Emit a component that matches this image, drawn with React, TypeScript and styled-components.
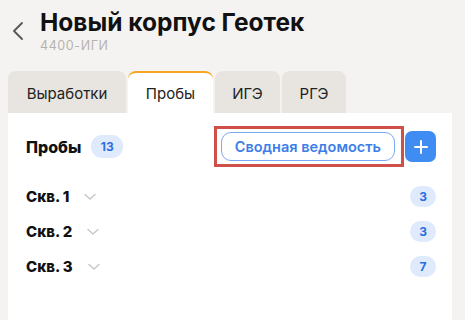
import React from 'react';
import styled, { createGlobalStyle } from 'styled-components';

const GlobalStyle = createGlobalStyle`
  html, body {
    margin: 0;
    padding: 0;
    background: #f5f3f1;
    font-family: Inter, "Noto Sans", sans-serif;
  }
`;

const Page = styled.div`
  width: 465px;
  height: 320px;
  overflow: hidden;
  display: flex;
  flex-direction: column;
`;

const Header = styled.div`
  display: flex;
  align-items: flex-start;
  padding: 6px 0 0 10px;
  gap: 14px;
`;

const BackButton = styled.div`
  width: 16px;
  height: 26px;
  margin-top: 12px;
  display: flex;
  align-items: center;
  justify-content: center;
  color: #555;
`;

const TitleBlock = styled.div`
  display: flex;
  flex-direction: column;
`;

const Title = styled.div`
  font-size: 24.5px;
  font-weight: 700;
  color: #111;
  line-height: 32px;
`;

const Subtitle = styled.div`
  font-size: 12.5px;
  color: #b5b3b0;
  line-height: 16px;
  letter-spacing: 0.6px;
`;

const Tabs = styled.div`
  display: flex;
  gap: 2px;
  margin: 17px 0 0 8px;
`;

const Tab = styled.div<{ $active?: boolean; $w: number }>`
  width: ${p => p.$w}px;
  height: 42px;
  box-sizing: border-box;
  display: flex;
  align-items: center;
  justify-content: center;
  font-size: 15px;
  color: #222;
  border-radius: 8px 8px 0 0;
  background: ${p => (p.$active ? '#ffffff' : '#e8e4e0')};
  border-top: ${p => (p.$active ? '2px solid #f5a623' : '2px solid transparent')};
`;

const Panel = styled.div`
  background: #fff;
  margin: 0 13px 0 8px;
  flex: 1;
  padding: 18px 16px 0 18px;
`;

const Toolbar = styled.div`
  display: flex;
  align-items: center;
  height: 31px;
`;

const SectionTitle = styled.div`
  font-size: 16px;
  font-weight: 800;
  color: #111;
`;

const Count = styled.div<{ $w?: number }>`
  min-width: ${p => p.$w ?? 26}px;
  height: 21px;
  box-sizing: border-box;
  padding: 0 6px;
  border-radius: 11px;
  background: #dfeafc;
  color: #2a6fe0;
  font-size: 12px;
  font-weight: 700;
  display: flex;
  align-items: center;
  justify-content: center;
`;

const Spacer = styled.div`
  flex: 1;
`;

const Highlight = styled.div`
  border: 3px solid #cf5048;
  padding: 3px 6px 3px 4px;
  margin: -6px 1px;
  display: flex;
`;

const OutlineButton = styled.button`
  height: 29px;
  padding: 0 13px;
  border: 1.5px solid #7aaaf2;
  border-radius: 10px;
  background: #fff;
  color: #3b7ee8;
  font-family: inherit;
  font-size: 14.5px;
  font-weight: 600;
`;

const AddButton = styled.button`
  width: 31px;
  height: 31px;
  border: none;
  border-radius: 7px;
  background: #3f8cf3;
  display: flex;
  align-items: center;
  justify-content: center;
  padding: 0;
`;

const List = styled.div`
  display: flex;
  flex-direction: column;
  margin-top: 24px;
  gap: 14px;
`;

const Row = styled.div`
  display: flex;
  align-items: center;
  height: 21px;
`;

const RowLabel = styled.div`
  font-size: 15px;
  font-weight: 800;
  color: #111;
  margin-right: 15px;
`;

const wells = [
  { name: 'Скв. 1', count: 3 },
  { name: 'Скв. 2', count: 3 },
  { name: 'Скв. 3', count: 7 },
];

const App = () => {
  return (
    <Page>
      <GlobalStyle />
      <Header>
        <BackButton>
          <svg width="12" height="20" viewBox="0 0 12 20" fill="none">
            <path d="M10 2L2 10l8 8" stroke="#555" strokeWidth="1.8" strokeLinecap="round" strokeLinejoin="round" />
          </svg>
        </BackButton>
        <TitleBlock>
          <Title>Новый корпус Геотек</Title>
          <Subtitle>4400-ИГИ</Subtitle>
        </TitleBlock>
      </Header>
      <Tabs>
        <Tab $w={118}>Выработки</Tab>
        <Tab $w={85} $active>Пробы</Tab>
        <Tab $w={65}>ИГЭ</Tab>
        <Tab $w={64}>РГЭ</Tab>
      </Tabs>
      <Panel>
        <Toolbar>
          <SectionTitle>Пробы</SectionTitle>
          <Count $w={32} style={{ marginLeft: 10, height: 23 }}>13</Count>
          <Spacer />
          <Highlight>
            <OutlineButton>Сводная ведомость</OutlineButton>
          </Highlight>
          <AddButton>
            <svg width="16" height="16" viewBox="0 0 16 16">
              <path d="M8 2v12M2 8h12" stroke="#fff" strokeWidth="2" strokeLinecap="round" />
            </svg>
          </AddButton>
        </Toolbar>
        <List>
          {wells.map(w => (
            <Row key={w.name}>
              <RowLabel>{w.name}</RowLabel>
              <svg width="12" height="8" viewBox="0 0 12 8" fill="none">
                <path d="M1 1.5l5 4.5 5-4.5" stroke="#c9c6c2" strokeWidth="1.4" strokeLinecap="round" strokeLinejoin="round" />
              </svg>
              <Spacer />
              <Count>{w.count}</Count>
            </Row>
          ))}
        </List>
      </Panel>
    </Page>
  );
};

export default App;
